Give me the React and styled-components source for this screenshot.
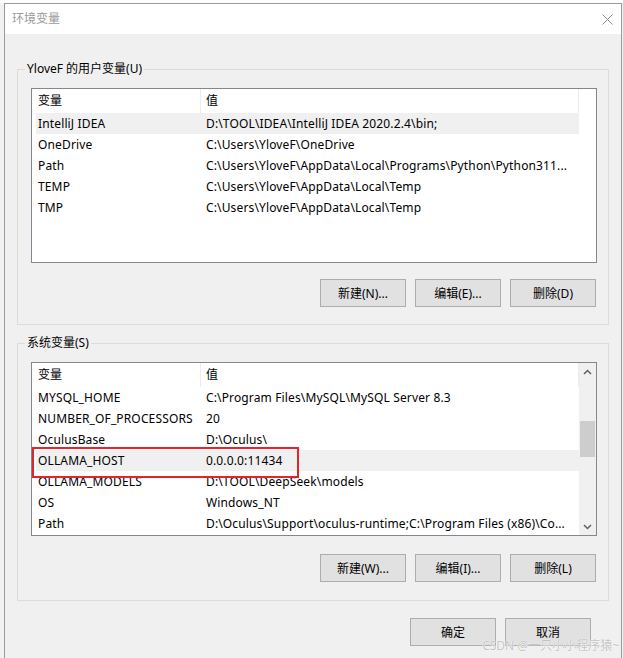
import React from 'react';
import styled, { createGlobalStyle } from 'styled-components';

const GlobalStyle = createGlobalStyle`
  html, body {
    margin: 0;
    padding: 0;
    height: 100%;
    overflow: hidden;
  }
  body {
    background: linear-gradient(#ffffff 0 3px, #f2f2f2 3px);
    font-family: "Noto Sans", "Noto Sans CJK SC", sans-serif;
    font-size: 12px;
    color: #000;
  }
`;

const userVars = [
  { name: 'IntelliJ IDEA', value: 'D:\\TOOL\\IDEA\\IntelliJ IDEA 2020.2.4\\bin;', selected: true },
  { name: 'OneDrive', value: 'C:\\Users\\YloveF\\OneDrive' },
  { name: 'Path', value: 'C:\\Users\\YloveF\\AppData\\Local\\Programs\\Python\\Python311...' },
  { name: 'TEMP', value: 'C:\\Users\\YloveF\\AppData\\Local\\Temp' },
  { name: 'TMP', value: 'C:\\Users\\YloveF\\AppData\\Local\\Temp' },
];

const systemVars = [
  { name: 'MYSQL_HOME', value: 'C:\\Program Files\\MySQL\\MySQL Server 8.3' },
  { name: 'NUMBER_OF_PROCESSORS', value: '20' },
  { name: 'OculusBase', value: 'D:\\Oculus\\' },
  { name: 'OLLAMA_HOST', value: '0.0.0.0:11434', selected: true },
  { name: 'OLLAMA_MODELS', value: 'D:\\TOOL\\DeepSeek\\models' },
  { name: 'OS', value: 'Windows_NT' },
  { name: 'Path', value: 'D:\\Oculus\\Support\\oculus-runtime;C:\\Program Files (x86)\\Co...' },
];

function Chevron({ down }) {
  return (
    <svg width="9" height="6" viewBox="0 0 9 6">
      <path
        d={down ? 'M1 1 L4.5 4.5 L8 1' : 'M1 5 L4.5 1.5 L8 5'}
        fill="none"
        stroke="#606060"
        strokeWidth="1.5"
      />
    </svg>
  );
}

function VarList({ rows, height, scroll, marked }) {
  return (
    <ListBox $height={height}>
      <ListBody>
        <HeaderRow>
          <HeaderCell>变量</HeaderCell>
          <HeaderCell $value>值</HeaderCell>
        </HeaderRow>
        {rows.map((r) => (
          <Row key={r.name} $selected={r.selected}>
            <NameCell>{r.name}</NameCell>
            <ValueCell>{r.value}</ValueCell>
          </Row>
        ))}
        {marked && <RedMark />}
      </ListBody>
      {scroll ? (
        <ScrollBar>
          <ArrowBtn><Chevron /></ArrowBtn>
          <Track>
            <Thumb $offset={41} $size={36} />
          </Track>
          <ArrowBtn><Chevron down /></ArrowBtn>
        </ScrollBar>
      ) : (
        <ScrollGap />
      )}
    </ListBox>
  );
}

export default function App() {
  return (
    <>
      <GlobalStyle />
      <Dialog>
        <TitleBar>
          <Title>环境变量</Title>
          <CloseBtn>
            <svg width="11" height="11" viewBox="0 0 11 11">
              <path d="M0.5 0.5 L10.5 10.5 M10.5 0.5 L0.5 10.5" stroke="#8a8a8a" strokeWidth="1" />
            </svg>
          </CloseBtn>
        </TitleBar>
        <Content>
          <Group $top={35} $bottom={17}>
            <GroupTitle>YloveF 的用户变量(U)</GroupTitle>
            <VarList rows={userVars} height={175} />
            <ButtonRow $top={16}>
              <Button>新建(N)...</Button>
              <Button>编辑(E)...</Button>
              <Button>删除(D)</Button>
            </ButtonRow>
          </Group>
          <Group $top={18} $bottom={18}>
            <GroupTitle>系统变量(S)</GroupTitle>
            <VarList rows={systemVars} height={174} scroll marked />
            <ButtonRow $top={18}>
              <Button>新建(W)...</Button>
              <Button>编辑(I)...</Button>
              <Button>删除(L)</Button>
            </ButtonRow>
          </Group>
          <Footer>
            <Button>确定</Button>
            <Button>取消</Button>
          </Footer>
        </Content>
      </Dialog>
      <Watermark>CSDN @一只小小程序猿~</Watermark>
    </>
  );
}

const Dialog = styled.div`
  margin: 3px 0 0 4px;
  width: 618px;
  height: 655px;
  box-sizing: border-box;
  border: 1px solid #9a9a9a;
  border-bottom: none;
  background: #f0f0f0;
`;

const TitleBar = styled.div`
  height: 30px;
  background: #fff;
  display: flex;
  align-items: center;
  justify-content: space-between;
  padding: 0 0 0 7px;
`;

const Title = styled.span`
  color: #9a9a9a;
  font-size: 12px;
  line-height: 16px;
`;

const CloseBtn = styled.div`
  width: 28px;
  height: 30px;
  display: flex;
  align-items: center;
  justify-content: center;
`;

const Content = styled.div`
  padding: 0 12px;
`;

const Group = styled.div`
  margin-top: ${(p) => p.$top}px;
  border: 1px solid #dcdcdc;
  padding: 0 11px ${(p) => p.$bottom}px 13px;
`;

const GroupTitle = styled.div`
  width: fit-content;
  margin: -9px 0 11px -6px;
  padding: 0 2px;
  line-height: 16px;
  background: #f0f0f0;
`;

const ListBox = styled.div`
  height: ${(p) => p.$height}px;
  box-sizing: border-box;
  border: 1px solid #828790;
  background: #fff;
  display: flex;
`;

const ListBody = styled.div`
  position: relative;
  flex: 1;
  padding-left: 4px;
  overflow: hidden;
`;

const HeaderRow = styled.div`
  display: grid;
  grid-template-columns: 165px 1fr;
  height: 24px;
`;

const HeaderCell = styled.div`
  box-sizing: border-box;
  border-right: 1px solid #ececec;
  padding-left: ${(p) => (p.$value ? 5 : 2)}px;
  line-height: 24px;
`;

const Row = styled.div`
  display: grid;
  grid-template-columns: 164px 1fr;
  height: 21px;
  line-height: 21px;
  letter-spacing: 0.14px;
  background: ${(p) => (p.$selected ? '#f0f0f0' : 'transparent')};
  white-space: nowrap;
`;

const NameCell = styled.div`
  padding-left: 2px;
`;

const ValueCell = styled.div`
  padding-left: 6px;
`;

const RedMark = styled.div`
  position: absolute;
  left: 0;
  top: 84px;
  width: 267px;
  height: 31px;
  box-sizing: border-box;
  border: 2px solid #e0252b;
`;

const ScrollGap = styled.div`
  width: 17px;
`;

const ScrollBar = styled.div`
  width: 17px;
  background: #f0f0f0;
  display: flex;
  flex-direction: column;
`;

const ArrowBtn = styled.div`
  height: 17px;
  display: flex;
  align-items: center;
  justify-content: center;
`;

const Track = styled.div`
  flex: 1;
`;

const Thumb = styled.div`
  margin: ${(p) => p.$offset}px 1px 0 1px;
  height: ${(p) => p.$size}px;
  background: #cdcdcd;
`;

const ButtonRow = styled.div`
  display: flex;
  justify-content: flex-end;
  gap: 9px;
  margin-top: ${(p) => p.$top}px;
  padding-right: 1px;
`;

const Footer = styled.div`
  display: flex;
  justify-content: flex-end;
  gap: 9px;
  margin-top: 17px;
  padding-right: 18px;
`;

const Button = styled.button`
  width: 86px;
  height: 28px;
  box-sizing: border-box;
  border: 1px solid #adadad;
  background: #e1e1e1;
  font-family: inherit;
  font-size: 12px;
  color: #000;
  padding: 0;
`;

const Watermark = styled.div`
  position: absolute;
  right: 4px;
  bottom: 4px;
  font-size: 12px;
  color: #c4c4c4;
  text-shadow: 0 0 1px #fff, 0 0 1px #fff;
`;
